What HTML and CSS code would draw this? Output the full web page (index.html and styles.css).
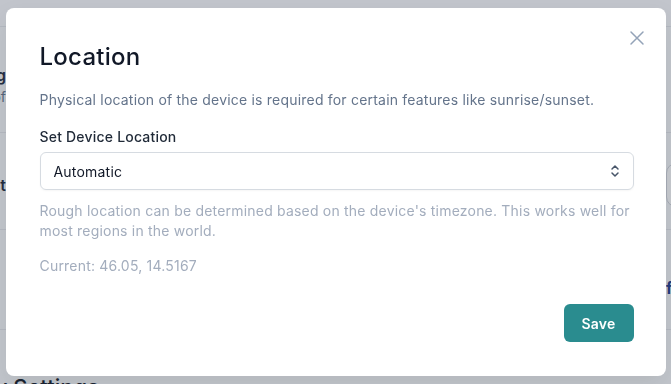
FILE: index.html
```html
<!DOCTYPE html>
<html>

<head>
  <meta charset="UTF-8">
  <meta name="viewport" content="width=device-width, initial-scale=1">
  <title>Location</title>
  <link rel="stylesheet" href="styles.css">
</head>

<body>
  <!-- settings page behind the dialog -->
  <div class="page">
    <div class="row row-top"></div>
    <div class="row row-a">
      <div class="side">
        <div class="side-text">
          <b>Timezone Setting</b>
          <span>Used for schedules and logs of</span>
        </div>
      </div>
      <div class="side-right"></div>
    </div>
    <div class="row row-b">
      <div class="side">
        <div class="side-text"><b>Brightness Sensitivit</b></div>
      </div>
      <div class="side-right"><span class="pill"></span></div>
    </div>
    <div class="row row-c">
      <div class="side"></div>
      <div class="side-right"><b class="frag">f</b></div>
    </div>
    <div class="section-wrap">
      <h2 class="section">Advanced Memory Settings</h2>
    </div>
  </div>

  <div class="overlay">
    <div class="modal">
      <button class="close" aria-label="Close">
        <svg width="16" height="16" viewBox="0 0 16 16" fill="none" stroke="currentColor" stroke-width="1.5" stroke-linecap="round">
          <path d="M2 2l12 12M14 2L2 14"/>
        </svg>
      </button>
      <h1>Location</h1>
      <p class="desc">Physical location of the device is required for certain features like sunrise/sunset.</p>
      <label class="label">Set Device Location</label>
      <div class="select">
        <span>Automatic</span>
        <svg width="12" height="16" viewBox="0 0 12 16" fill="none" stroke="currentColor" stroke-width="1.5" stroke-linecap="round" stroke-linejoin="round">
          <path d="M3 6l3-3 3 3M3 10l3 3 3-3"/>
        </svg>
      </div>
      <p class="help">Rough location can be determined based on the device's timezone. This works well for most regions in the world.</p>
      <p class="current">Current: 46.05, 14.5167</p>
      <div class="actions">
        <button class="save">Save</button>
      </div>
    </div>
  </div>
</body>

</html>
```

FILE: styles.css
```css
*{
  box-sizing: border-box;
  margin: 0;
  padding: 0;
}

body{
  font-family: Inter, "Noto Sans", sans-serif;
  background: #fff;
  width: 671px;
  height: 384px;
  overflow: hidden;
}

/* page behind */
.page{
  height: 384px;
  background: #f8f9fb;
}
.row{
  display: flex;
  justify-content: space-between;
  border-bottom: 1px solid #e5e7eb;
}
.row-top{ height: 27px; }
.row-a{ height: 106px; }
.row-b{ height: 97px; }
.row-c{ height: 100px; }
.side{
  width: 6px;
  display: flex;
  justify-content: flex-end;
  white-space: nowrap;
}
.side-text{
  display: flex;
  flex-direction: column;
  align-items: flex-end;
  padding-top: 36px;
}
.side-text b{
  font-size: 16px;
  font-weight: 600;
  color: #1e293b;
  line-height: 24px;
}
.side-text span{
  font-size: 14px;
  color: #64748b;
  line-height: 20px;
}
.row-b .side-text{ padding-top: 40px; }
.side-right{
  width: 5px;
}
.pill{
  display: block;
  width: 40px;
  height: 44px;
  margin-top: 30px;
  border: 1px solid #d1d5db;
  border-radius: 10px;
  background: #fff;
}
.frag{
  display: block;
  margin-top: 48px;
  font-size: 16px;
  color: #1e3a8a;
}
.section-wrap{
  width: 99px;
  display: flex;
  justify-content: flex-end;
  white-space: nowrap;
  margin-top: 43px;
}
.section{
  font-size: 22px;
  font-weight: 500;
  color: #111827;
  line-height: 28px;
}

/* dialog */
.overlay{
  position: fixed;
  inset: 0;
  background: rgba(55, 65, 81, 0.28);
  display: flex;
  align-items: center;
  justify-content: center;
}
.modal{
  position: relative;
  width: 660px;
  height: 368px;
  background: #fff;
  border-radius: 8px;
  padding: 33px 32px 34px 34px;
  display: flex;
  flex-direction: column;
  box-shadow: 0 10px 25px rgba(0, 0, 0, 0.08);
}
.close{
  position: absolute;
  top: 22px;
  right: 21px;
  background: none;
  border: 0;
  color: #94a3b8;
  display: flex;
}
h1{
  font-size: 24px;
  line-height: 32px;
  font-weight: 500;
  color: #111827;
  letter-spacing: 0.25px;
}
.desc,
.label,
.help,
.current{
  font-size: 14px;
  line-height: 20px;
  letter-spacing: 0.2px;
}
.desc{
  margin-top: 17px;
  color: #64748b;
}
.label{
  margin-top: 17px;
  font-weight: 500;
  color: #1f2937;
}
.select{
  margin-top: 5px;
  height: 38px;
  border: 1px solid #d6dbe1;
  border-radius: 6px;
  display: flex;
  align-items: center;
  justify-content: space-between;
  padding: 0 12px 0 13px;
  font-size: 14px;
  letter-spacing: 0.2px;
  color: #111827;
  box-shadow: 0 1px 2px rgba(0, 0, 0, 0.04);
}
.select svg{
  color: #475569;
}
.help{
  margin-top: 11px;
  color: #a3adbd;
}
.current{
  margin-top: 15px;
  color: #a3adbd;
}
.actions{
  margin-top: auto;
  display: flex;
  justify-content: flex-end;
}
.save{
  width: 70px;
  height: 38px;
  border: 0;
  border-radius: 6px;
  background: #2a8c8f;
  color: #fff;
  font-family: inherit;
  font-size: 14px;
  font-weight: 600;
  letter-spacing: 0.2px;
}
```
